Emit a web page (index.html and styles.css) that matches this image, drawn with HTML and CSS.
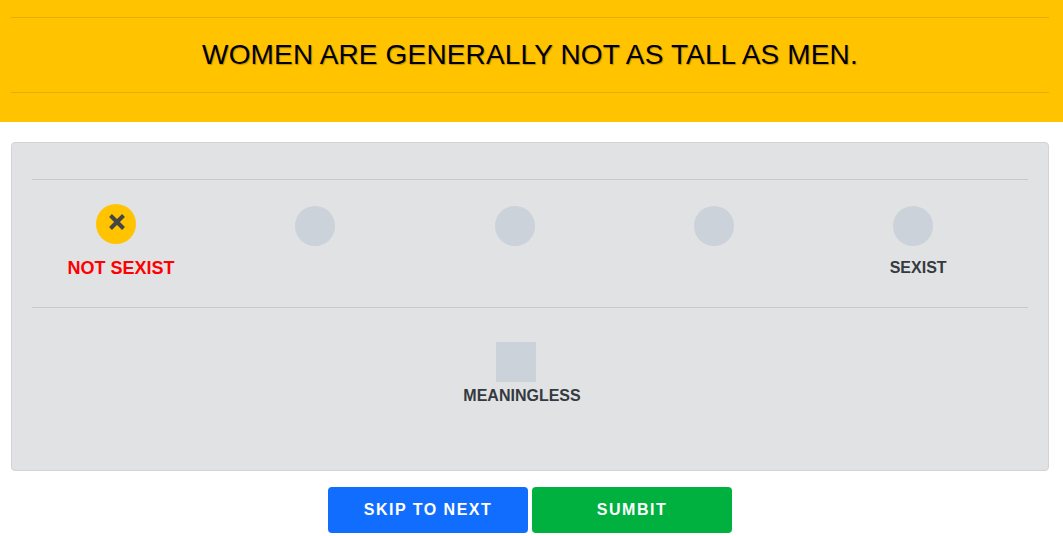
FILE: index.html
```html
<!DOCTYPE html>
<html lang="en">
<head>
<meta charset="utf-8">
<title>Rate statement</title>
<link rel="stylesheet" href="styles.css">
</head>
<body>
<header class="banner">
  <div class="banner-inner">
    <h1 class="statement">WOMEN ARE GENERALLY NOT AS TALL AS MEN.</h1>
  </div>
</header>
<main class="main">
  <section class="card">
    <div class="scale-wrap">
      <div class="scale">
        <div class="option">
          <span class="dot dot-selected">
            <svg class="x-icon" viewBox="0 0 18 18" width="18" height="18"><path d="M2.5 2.5 L15.5 15.5 M15.5 2.5 L2.5 15.5" stroke="#454545" stroke-width="4" fill="none"/></svg>
          </span>
          <span class="label label-selected">NOT SEXIST</span>
        </div>
        <div class="option"><span class="dot"></span><span class="label"></span></div>
        <div class="option"><span class="dot"></span><span class="label"></span></div>
        <div class="option"><span class="dot"></span><span class="label"></span></div>
        <div class="option"><span class="dot"></span><span class="label">SEXIST</span></div>
      </div>
    </div>
    <div class="meaningless">
      <span class="square"></span>
      <span class="label">MEANINGLESS</span>
    </div>
  </section>
  <div class="actions">
    <button class="btn btn-skip">SKIP TO NEXT</button>
    <button class="btn btn-submit">SUMBIT</button>
  </div>
</main>
</body>
</html>
```

FILE: styles.css
```css
* { box-sizing: border-box; }

body {
  margin: 0;
  background: #ffffff;
  font-family: "Liberation Sans", Arial, Helvetica, sans-serif;
  color: #343a40;
}

.banner {
  background: #ffc300;
  padding: 17px 14px 29px 11px;
}

.banner-inner {
  border-top: 1px solid #e3ae08;
  border-bottom: 1px solid #e3ae08;
  height: 76px;
  display: flex;
  align-items: center;
  justify-content: center;
}

.statement {
  margin: 0;
  font-size: 28px;
  line-height: 32px;
  font-weight: normal;
  letter-spacing: 0.15px;
  color: #000;
  text-shadow: 1px 1px 1px rgba(0, 0, 0, 0.25);
}

.main {
  padding: 20px 14px 0 11px;
}

.card {
  background: #e1e2e4;
  border: 1px solid #d2d3d5;
  border-radius: 4px;
  padding: 36px 20px 21px;
}

.scale-wrap {
  border-top: 1px solid #c8c9cb;
}

.scale {
  display: grid;
  grid-template-columns: repeat(5, 199.3px);
  margin-left: -15.7px;
  padding: 26px 0 30px;
}

.option {
  display: flex;
  flex-direction: column;
  align-items: center;
}

.dot {
  width: 40px;
  height: 40px;
  border-radius: 50%;
  background: #cbd2da;
  display: flex;
  align-items: center;
  justify-content: center;
}

.dot-selected {
  background: #ffc300;
  transform: translateY(-2px);
}

.x-icon { display: block; margin-left: 2px; margin-top: -5px; }

.label {
  display: block;
  min-height: 18px;
  margin-top: 13px;
  padding-left: 10px;
  font-size: 16px;
  line-height: 18px;
  font-weight: bold;
  color: #343a40;
  text-align: center;
  white-space: nowrap;
}

.label-selected {
  font-size: 18px;
  color: #ff0000;
}

.meaningless {
  border-top: 1px solid #c8c9cb;
  display: flex;
  flex-direction: column;
  align-items: center;
  padding: 34px 16px 44px 0;
}

.meaningless .square {
  width: 40px;
  height: 40px;
  background: #cbd2da;
  margin-left: -12px;
}

.meaningless .label {
  margin-top: 5px;
  padding-left: 0;
}

.actions {
  display: flex;
  justify-content: center;
  gap: 4px;
  margin-top: 16px;
}

.btn {
  width: 200px;
  height: 46px;
  border: none;
  border-radius: 4px;
  color: #ffffff;
  font-family: "Liberation Sans", Arial, Helvetica, sans-serif;
  font-size: 16px;
  font-weight: bold;
  letter-spacing: 1.5px;
  padding: 0;
}

.btn-skip { background: #116dfe; }
.btn-submit { background: #00b140; }
```
